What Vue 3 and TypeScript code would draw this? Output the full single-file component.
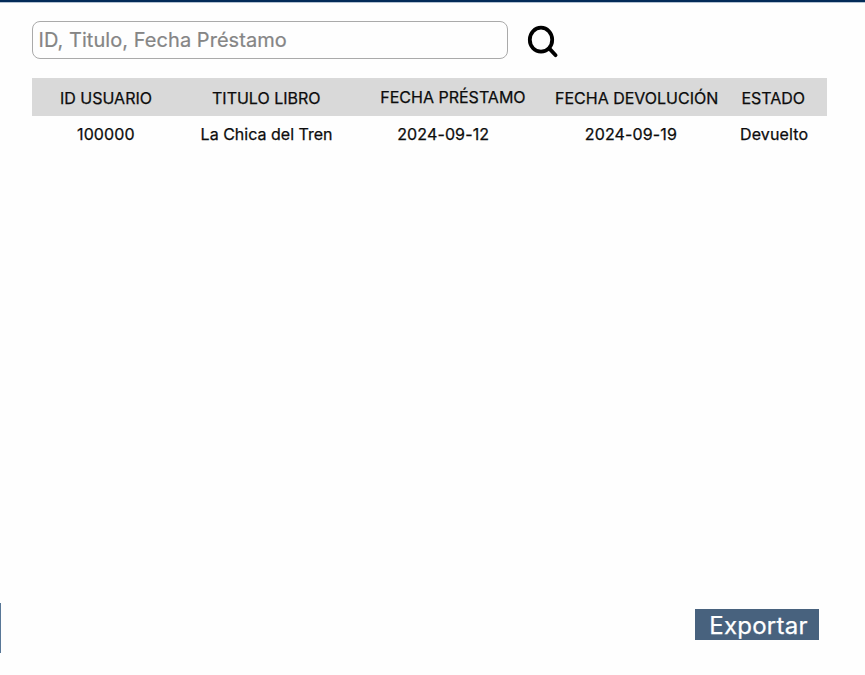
<script setup lang="ts">
import { ref } from 'vue'

interface Prestamo {
  usuario: string
  titulo: string
  prestamo: string
  devolucion: string
  estado: string
}

const query = ref<string>('')
const prestamos = ref<Prestamo[]>([
  {
    usuario: '100000',
    titulo: 'La Chica del Tren',
    prestamo: '2024-09-12',
    devolucion: '2024-09-19',
    estado: 'Devuelto',
  },
])
</script>

<template>
  <main class="page">
    <div class="topbar"></div>
    <form class="search" @submit.prevent>
      <input v-model="query" class="search-input" type="text" placeholder="ID, Titulo, Fecha Préstamo" />
      <button class="search-button" type="submit">
        <svg width="32" height="34" viewBox="0 0 32 34" fill="none" stroke="#000">
          <ellipse cx="14" cy="15.7" rx="11.2" ry="12" stroke-width="3.8" />
          <path d="M22.2 24.4 L28.6 31.2" stroke-width="3.8" stroke-linecap="round" />
        </svg>
      </button>
    </form>
    <section class="table">
      <div class="row head">
        <span>ID USUARIO</span>
        <span>TITULO LIBRO</span>
        <span class="raised">FECHA PRÉSTAMO</span>
        <span>FECHA DEVOLUCIÓN</span>
        <span>ESTADO</span>
      </div>
      <div v-for="p in prestamos" :key="p.usuario" class="row body">
        <span>{{ p.usuario }}</span>
        <span class="title">{{ p.titulo }}</span>
        <span>{{ p.prestamo }}</span>
        <span>{{ p.devolucion }}</span>
        <span>{{ p.estado }}</span>
      </div>
    </section>
    <footer class="footer">
      <div class="side-edge"></div>
      <button class="export" type="button">Exportar</button>
    </footer>
  </main>
</template>

<style>
body {
  background: #fefefe;
}
</style>

<style scoped>
.page {
  box-sizing: border-box;
  width: 865px;
  height: 675px;
  display: flex;
  flex-direction: column;
  overflow: hidden;
  font-family: Inter, 'Liberation Sans', sans-serif;
  color: #0c0c0c;
}
.topbar {
  height: 2px;
  flex: none;
  background: #032b58;
  border-bottom: 1px solid #b4c2d2;
}
.search {
  display: flex;
  gap: 19px;
  padding: 18px 0 0 31.5px;
}
.search-input {
  box-sizing: border-box;
  width: 476.5px;
  height: 38px;
  padding: 0 6px;
  border: 1px solid #aaa;
  border-radius: 8px;
  background: #fefefe;
  outline: none;
  font: 400 20px Inter, 'Liberation Sans', sans-serif;
  letter-spacing: 0.05px;
  color: #222;
}
.search-input::placeholder {
  color: #858585;
  -webkit-text-stroke: 0.2px #858585;
  opacity: 1;
}
.search-button {
  height: 38px;
  padding: 3px 0 0;
  border: 0;
  background: none;
  display: flex;
}
.table {
  padding: 19px 0 0 32px;
  width: 795px;
}
.row {
  display: grid;
  align-items: center;
  white-space: nowrap;
  font-size: 16px;
  -webkit-text-stroke: 0.25px #0c0c0c;
}
.head {
  box-sizing: border-box;
  height: 38px;
  padding: 2px 0 0 28px;
  background: #d9d9d9;
  grid-template-columns: 152px 168.3px 174.7px 186.4px 85.6px;
}
.raised {
  padding-bottom: 2px;
}
.body {
  height: 36px;
  padding-left: 45px;
  letter-spacing: 0.13px;
  grid-template-columns: 123.6px 196.6px 187.6px 155.2px 87px;
}
.title {
  letter-spacing: 0.01px;
}
.footer {
  margin-top: auto;
  height: 72px;
  display: flex;
  justify-content: space-between;
  align-items: flex-start;
  padding-right: 46.5px;
}
.side-edge {
  width: 1px;
  height: 50px;
  background: #587797;
}
.export {
  box-sizing: border-box;
  width: 124px;
  height: 31px;
  margin-top: 6px;
  padding: 2px 0 0 4px;
  border: 0;
  background: #48627e;
  color: #fff;
  font: 400 24px/29px Inter, 'Liberation Sans', sans-serif;
  letter-spacing: 0.25px;
  -webkit-text-stroke: 0.25px #fff;
  text-align: center;
}
</style>
